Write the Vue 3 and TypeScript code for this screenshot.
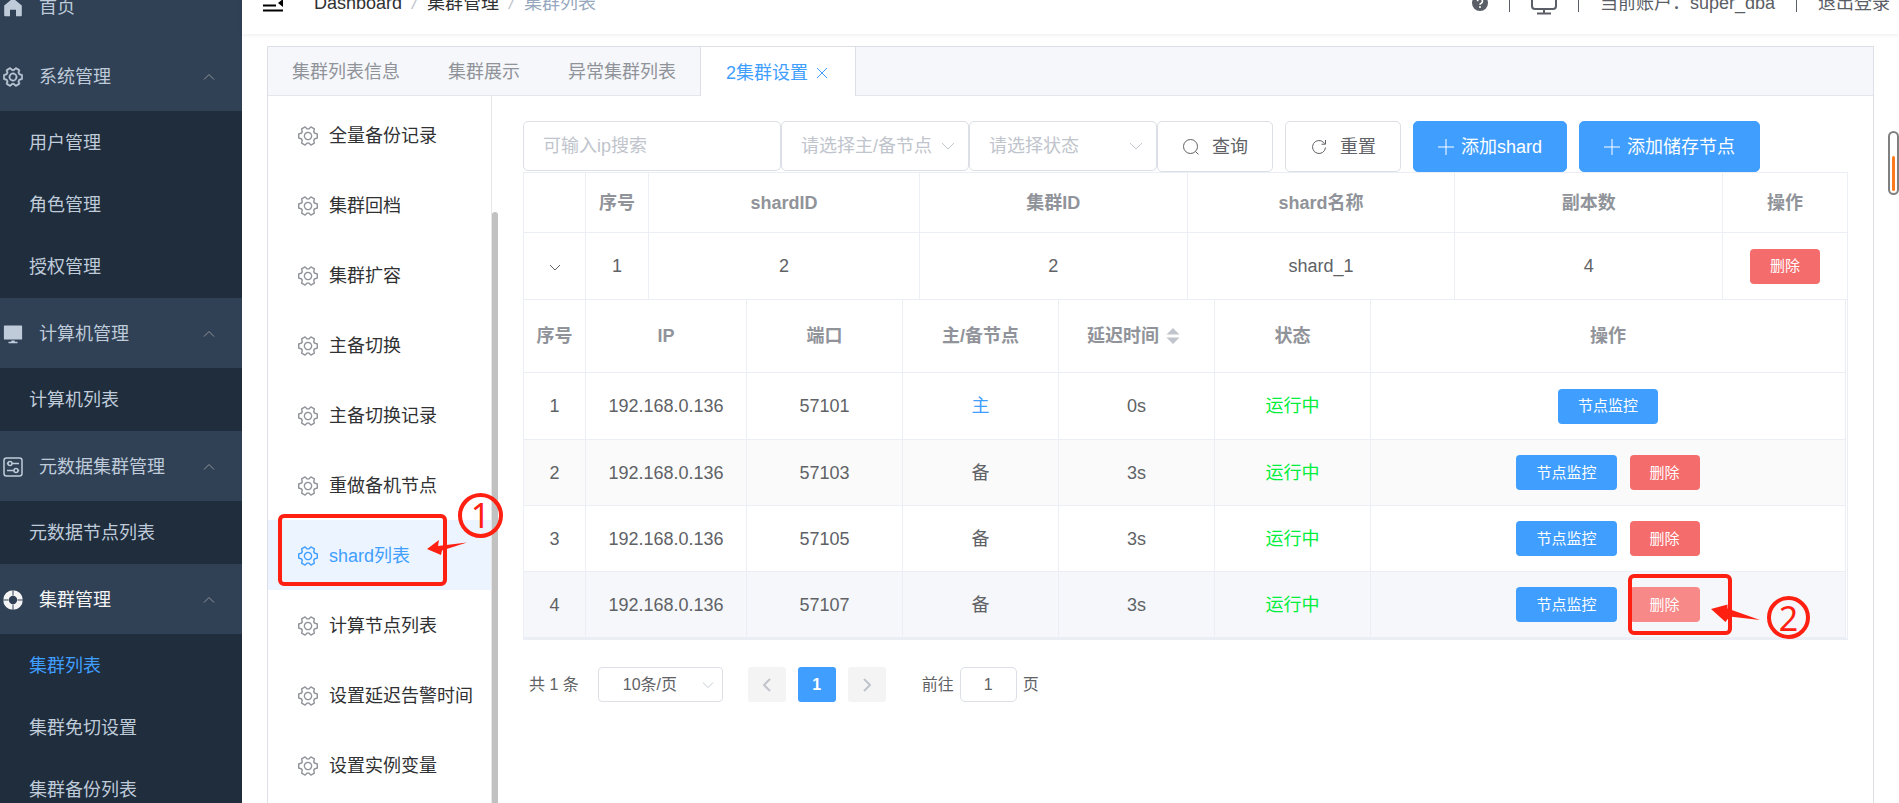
<script setup lang="ts">
import { ref } from 'vue'

interface MenuGroup {
  icon: string
  title: string
  open?: boolean
  children: string[]
}

interface DbNode {
  id: number
  ip: string
  port: number
  primary: boolean
  delay: string
}

const groups: MenuGroup[] = [
  { icon: 'home', title: '首页', children: [] },
  { icon: 'gear', title: '系统管理', children: ['用户管理', '角色管理', '授权管理'] },
  { icon: 'platform', title: '计算机管理', children: ['计算机列表'] },
  { icon: 'setup', title: '元数据集群管理', children: ['元数据节点列表'] },
  { icon: 'help', title: '集群管理', open: true, children: ['集群列表', '集群免切设置', '集群备份列表'] },
]
const activeLink = '集群列表'

const tabs = ['集群列表信息', '集群展示', '异常集群列表']

const settings = [
  '全量备份记录', '集群回档', '集群扩容', '主备切换', '主备切换记录',
  '重做备机节点', 'shard列表', '计算节点列表', '设置延迟告警时间', '设置实例变量',
]
const activeSetting = 'shard列表'

const nodes: DbNode[] = [
  { id: 1, ip: '192.168.0.136', port: 57101, primary: true, delay: '0s' },
  { id: 2, ip: '192.168.0.136', port: 57103, primary: false, delay: '3s' },
  { id: 3, ip: '192.168.0.136', port: 57105, primary: false, delay: '3s' },
  { id: 4, ip: '192.168.0.136', port: 57107, primary: false, delay: '3s' },
]
const hovered = 4

const keyword = ref('')
const role = ref('')
const state = ref('')
const pageSize = ref('10')
const page = ref('1')

const gearPath =
  'M600.704 64a32 32 0 0 1 30.464 22.208l35.2 109.376c14.784 7.232 28.928 15.36 42.432 24.512l112.384-24.192a32 32 0 0 1 34.432 15.36L944.32 364.8a32 32 0 0 1-4.032 37.504l-77.12 85.12a357.12 357.12 0 0 1 0 49.024l77.12 85.248a32 32 0 0 1 4.032 37.504l-88.704 153.6a32 32 0 0 1-34.432 15.296L708.8 803.904c-13.44 9.088-27.648 17.28-42.368 24.512l-35.264 109.376A32 32 0 0 1 600.704 960H423.296a32 32 0 0 1-30.464-22.208L357.696 828.48a351.616 351.616 0 0 1-42.56-24.64l-112.32 24.256a32 32 0 0 1-34.432-15.36L79.68 659.2a32 32 0 0 1 4.032-37.504l77.12-85.248a357.12 357.12 0 0 1 0-48.896l-77.12-85.248A32 32 0 0 1 79.68 364.8l88.704-153.6a32 32 0 0 1 34.432-15.296l112.32 24.256c13.568-9.152 27.776-17.408 42.56-24.64l35.2-109.312A32 32 0 0 1 423.232 64H600.64zm-23.424 64H446.72l-36.352 113.088-24.512 11.968a294.113 294.113 0 0 0-34.816 20.096l-22.656 15.36-116.224-25.088-65.28 113.152 79.68 88.192-1.92 27.136a293.12 293.12 0 0 0 0 40.192l1.92 27.136-79.808 88.192 65.344 113.152 116.224-25.024 22.656 15.296a294.113 294.113 0 0 0 34.816 20.096l24.512 11.968L446.72 896h130.688l36.48-113.152 24.448-11.904a288.282 288.282 0 0 0 34.752-20.096l22.592-15.296 116.288 25.024 65.28-113.152-79.744-88.192 1.92-27.136a293.12 293.12 0 0 0 0-40.256l-1.92-27.136 79.808-88.128-65.344-113.152-116.288 24.96-22.592-15.232a287.616 287.616 0 0 0-34.752-20.096l-24.448-11.904L577.344 128zM512 320a192 192 0 1 1 0 384 192 192 0 0 1 0-384zm0 64a128 128 0 1 0 0 256 128 128 0 0 0 0-256z'
</script>

<template>
  <div class="viewport">
    <div class="layout">
      <nav class="sidebar" aria-label="主导航">
        <section v-for="g in groups" :key="g.title">
          <button type="button" class="group" :class="{ open: g.open }">
            <svg v-if="g.icon === 'home'" class="ico" viewBox="0 0 20 20">
              <path d="M10 1.2 1.2 8.6v9.6a1 1 0 0 0 1 1H7v-6.4h6v6.4h4.8a1 1 0 0 0 1-1V8.6z" fill="currentColor" />
            </svg>
            <svg v-else-if="g.icon === 'gear'" class="ico" viewBox="52 52 920 920">
              <path :d="gearPath" fill="currentColor" stroke="currentColor" stroke-width="20" transform="rotate(30 512 512)" />
            </svg>
            <svg v-else-if="g.icon === 'platform'" class="ico" viewBox="0 0 20 20">
              <path d="M1.5 1.5h17a.6.6 0 0 1 .6.6V15a.6.6 0 0 1-.6.6h-17A.6.6 0 0 1 .9 15V2.100a.6.6 0 0 1 .6-.6zM8.500 16.600h3l.5 1.200h2.500v1.500h-9v-1.500H8z" fill="currentColor" />
            </svg>
            <svg v-else-if="g.icon === 'setup'" class="ico" viewBox="0 0 20 20" fill="none" stroke="currentColor" stroke-width="1.500">
              <rect x="1" y="1" width="18" height="18" rx="2.500" />
              <circle cx="7" cy="6.500" r="2" /><path d="M9 6.500h7M3.800 6.500H5" />
              <circle cx="13" cy="13.500" r="2" /><path d="M4 13.500h7M15 13.500h1.200" />
            </svg>
            <svg v-else class="ico" viewBox="0 0 20 20">
              <circle cx="10" cy="10" r="7" fill="none" stroke="currentColor" stroke-width="5.600" />
              <path d="M10 0v5.500M10 14.500V20M0 10h5.500M14.500 10H20" stroke="#304156" stroke-width="1" />
            </svg>
            <span class="group-title">{{ g.title }}</span>
            <svg v-if="g.children.length" class="fold" viewBox="0 0 12 8"><path d="M1 6.500 6 1.500l5 5" /></svg>
          </button>
          <ul v-if="g.children.length" class="links">
            <li v-for="c in g.children" :key="c">
              <a href="#" :class="{ on: c === activeLink }">{{ c }}</a>
            </li>
          </ul>
        </section>
      </nav>

      <div class="page">
        <header class="topbar">
          <button type="button" class="burger" aria-label="折叠菜单">
            <svg viewBox="0 0 22 18"><path d="M1 1.500h20M1 11.500h13M1 16.500h20" stroke="#000" stroke-width="2" /><path d="M21 5v8l-5-4z" fill="#000" /></svg>
          </button>
          <nav class="crumbs" aria-label="面包屑">
            <a href="#">Dashboard</a><i>/</i><a href="#">集群管理</a><i>/</i><span>集群列表</span>
          </nav>
          <div class="account">
            <svg class="q" viewBox="0 0 16 16">
              <circle cx="8" cy="8" r="8" fill="#5a5e66" />
              <path d="M5.600 6.200a2.400 2.400 0 1 1 3.300 2.200c-.7.3-.9.600-.9 1.300" fill="none" stroke="#fff" stroke-width="1.600" /><circle cx="8" cy="12" r="1" fill="#fff" />
            </svg>
            <b></b>
            <svg class="screen" viewBox="0 0 26 24" fill="none" stroke="#5a5e66" stroke-width="2">
              <rect x="1" y="1" width="24" height="17" rx="3" /><path d="M13 18v4M6 22.500h14" />
            </svg>
            <b></b>
            <span>当前账户：super_dba</span>
            <b></b>
            <a href="#">退出登录</a>
          </div>
        </header>

        <main class="card">
          <div class="tabs" role="tablist">
            <button v-for="t in tabs" :key="t" type="button" role="tab" class="tab">{{ t }}</button>
            <button type="button" role="tab" aria-selected="true" class="tab current">
              2集群设置
              <svg viewBox="0 0 12 12"><path d="m1 1 10 10M11 1 1 11" /></svg>
            </button>
          </div>

          <div class="body">
            <div class="side">
              <ul class="side-menu">
                <li v-for="s in settings" :key="s" :class="{ on: s === activeSetting }">
                  <a href="#">
                    <svg class="ico" viewBox="64 64 896 896"><path :d="gearPath" fill="currentColor" transform="rotate(30 512 512)" /></svg>
                    {{ s }}
                  </a>
                  <svg v-if="s === activeSetting" class="mark mark-menu" viewBox="0 0 240 120">
                    <rect x="12" y="36" width="165" height="68" rx="4" />
                    <circle cx="212.500" cy="35.500" r="20.500" />
                    <path d="M159 69 171 60 170 66 199 62.500 174 70.500 173 75z" />
                    <text x="212.500" y="48">1</text>
                  </svg>
                </li>
              </ul>
              <div class="track"><div class="thumb"></div></div>
            </div>

            <section class="content">
              <form class="filters" @submit.prevent>
                <input v-model="keyword" class="kw" type="text" placeholder="可输入ip搜索" aria-label="可输入ip搜索" />
                <label class="pick">
                  <select v-model="role" aria-label="主/备节点">
                    <option value="">请选择主/备节点</option>
                  </select>
                  <svg viewBox="0 0 14 8"><path d="m1 1 6 6 6-6" /></svg>
                </label>
                <label class="pick">
                  <select v-model="state" aria-label="状态">
                    <option value="">请选择状态</option>
                  </select>
                  <svg viewBox="0 0 14 8"><path d="m1 1 6 6 6-6" /></svg>
                </label>
                <button type="submit" class="btn">
                  <svg viewBox="0 0 18 18"><circle cx="8.500" cy="8.500" r="7" /><path d="m13.500 13.500 3 3" /></svg>查询
                </button>
                <button type="reset" class="btn gap">
                  <svg viewBox="0 0 18 18"><path d="M15.500 9.500A6.500 6.500 0 1 1 13.600 4.400L15 5.800M15.500 2v4.200h-4" /></svg>重置
                </button>
                <button type="button" class="btn blue gap">
                  <svg viewBox="0 0 16 16"><path d="M8 0v16M0 8h16" /></svg>添加shard
                </button>
                <button type="button" class="btn blue gap">
                  <svg viewBox="0 0 16 16"><path d="M8 0v16M0 8h16" /></svg>添加储存节点
                </button>
              </form>

              <table class="grid outer">
                <colgroup>
                  <col class="c-idx" /><col class="c-num" /><col class="c-shard" /><col /><col /><col /><col class="c-op" />
                </colgroup>
                <thead>
                  <tr>
                    <th></th><th>序号</th><th>shardID</th><th>集群ID</th><th>shard名称</th><th>副本数</th><th>操作</th>
                  </tr>
                </thead>
                <tbody>
                  <tr>
                    <td>
                      <button type="button" class="expand" aria-label="收起">
                        <svg viewBox="0 0 12 8"><path d="m1 1 5 5 5-5" /></svg>
                      </button>
                    </td>
                    <td>1</td><td>2</td><td>2</td><td>shard_1</td><td>4</td>
                    <td><button type="button" class="mini red">删除</button></td>
                  </tr>
                  <tr>
                    <td colspan="7" class="nest">
                      <table class="grid inner">
                        <colgroup>
                          <col class="c-idx" /><col class="c-ip" /><col class="c-mid" /><col class="c-mid" /><col class="c-mid" /><col class="c-mid" /><col />
                        </colgroup>
                        <thead>
                          <tr>
                            <th>序号</th><th>IP</th><th>端口</th><th>主/备节点</th>
                            <th>
                              <span class="sort">延迟时间
                                <svg viewBox="0 0 14 16"><path d="M7 0l6.500 6.500H.5zM7 16 .5 9.500h13z" fill="#c0c4cc" /></svg>
                              </span>
                            </th>
                            <th>状态</th><th>操作</th>
                          </tr>
                        </thead>
                        <tbody>
                          <tr v-for="n in nodes" :key="n.id" :class="{ stripe: n.id === 2, hover: n.id === hovered }">
                            <td>{{ n.id }}</td>
                            <td>{{ n.ip }}</td>
                            <td>{{ n.port }}</td>
                            <td><a v-if="n.primary" href="#" class="primary">主</a><template v-else>备</template></td>
                            <td>{{ n.delay }}</td>
                            <td class="running">运行中</td>
                            <td>
                              <div class="ops">
                                <button type="button" class="mini">节点监控</button>
                                <div v-if="!n.primary" class="del">
                                  <button type="button" class="mini red" :class="{ over: n.id === hovered }">删除</button>
                                  <svg v-if="n.id === hovered" class="mark mark-del" viewBox="0 0 200 80">
                                    <rect x="10" y="9" width="100" height="57" rx="4" />
                                    <circle cx="168.500" cy="50.500" r="19.500" />
                                    <path d="M91 42 107.500 37.500 107.500 41.500 140 53 109.500 49.500 105.500 55z" />
                                    <text x="168.500" y="64">2</text>
                                  </svg>
                                </div>
                              </div>
                            </td>
                          </tr>
                        </tbody>
                      </table>
                    </td>
                  </tr>
                </tbody>
              </table>

              <div class="pager">
                <span>共 1 条</span>
                <label class="pick size">
                  <select v-model="pageSize" aria-label="每页条数"><option value="10">10条/页</option></select>
                  <svg viewBox="0 0 14 8"><path d="m1 1 6 6 6-6" /></svg>
                </label>
                <button type="button" class="pg" aria-label="上一页"><svg viewBox="0 0 8 14"><path d="M7 1 1 7l6 6" /></svg></button>
                <button type="button" class="pg now">1</button>
                <button type="button" class="pg" aria-label="下一页"><svg viewBox="0 0 8 14"><path d="m1 1 6 6-6 6" /></svg></button>
                <label class="jump">前往<input v-model="page" type="text" />页</label>
              </div>
            </section>
          </div>
        </main>
      </div>
    </div>
    <div class="meter"><div class="meter-fill"></div></div>
  </div>
</template>

<style>
body {
  margin: 0;
  background: #fff;
}
</style>

<style scoped>
* {
  box-sizing: border-box;
}
.viewport {
  position: relative;
  height: 100vh;
  overflow: hidden;
  font: 18px/24px "Liberation Sans", "Noto Sans CJK SC", sans-serif;
  color: #606266;
}
button,
input,
select {
  font: inherit;
  color: inherit;
  margin: 0;
}
button {
  padding: 0;
  border: 0;
  background: none;
  cursor: pointer;
}
a {
  color: inherit;
  text-decoration: none;
}
ul {
  list-style: none;
  margin: 0;
  padding: 0;
}
svg {
  display: block;
  flex: none;
}
/* the page is scrolled down a little, so its top edge is cut off */
.layout {
  display: flex;
  margin-top: -29px;
}
.ico {
  width: 20px;
  height: 20px;
}

.sidebar {
  flex: none;
  width: 242px;
  background: #1f2d3d;
  color: #bfcbd9;
}
.group {
  display: flex;
  align-items: center;
  width: 100%;
  height: 70px;
  padding: 1px 27px 0 3px;
  background: #304156;
}
.group.open {
  color: #f4f4f5;
}
.group-title {
  flex: 1;
  margin-left: 16px;
  text-align: left;
}
.fold {
  width: 12px;
  height: 8px;
}
.fold path {
  fill: none;
  stroke: #909399;
}
.links {
  padding-bottom: 1px;
}
.links a {
  display: block;
  height: 62px;
  padding-left: 29px;
  line-height: 64px;
}
.links .on {
  color: #409eff;
}

.page {
  flex: 1;
  min-width: 0;
}
.topbar {
  display: flex;
  align-items: center;
  height: 63px;
  padding: 0 9px 0 20px;
  box-shadow: 0 1px 4px rgba(0, 21, 41, 0.08);
}
.burger svg {
  width: 22px;
  height: 18px;
}
.crumbs {
  display: flex;
  margin-left: 30px;
  color: #303133;
}
.crumbs i {
  margin: 0 10px;
  color: #c0c4cc;
}
.crumbs span {
  color: #97a8be;
}
.account {
  display: flex;
  align-items: center;
  margin-left: auto;
  color: #5a5e66;
}
.account b {
  width: 1px;
  height: 18px;
  margin: 0 21px;
  background: #5a5e66;
}
.q {
  width: 16px;
  height: 16px;
}
.screen {
  width: 26px;
  height: 24px;
}

.card {
  margin: 12px 25px 0;
  border: 1px solid #dcdfe6;
}
.tabs {
  display: flex;
  height: 49px;
  background: #f5f7fa;
  border-bottom: 1px solid #e4e7ed;
}
.tab {
  padding: 2px 24px 0;
  color: #909399;
}
.tab.current {
  display: flex;
  align-items: center;
  gap: 8px;
  height: 49px;
  border: solid #dcdfe6;
  border-width: 0 1px;
  padding: 2px 27px 0 25px;
  background: #fff;
  color: #409eff;
}
.tab svg {
  width: 12px;
  height: 12px;
}
.tab path {
  stroke: #409eff;
}

.body {
  display: flex;
}
.side {
  display: flex;
  flex: none;
  width: 231px;
}
.side-menu {
  flex: 1;
  padding: 4px 0 70px;
}
.side-menu li {
  position: relative;
  color: #303133;
}
.side-menu a {
  display: flex;
  align-items: center;
  gap: 11px;
  height: 70px;
  padding: 2px 0 0 30px;
  white-space: nowrap;
}
.side-menu .ico {
  color: #909399;
}
.side-menu .on a,
.side-menu .on .ico {
  color: #409eff;
}
.side-menu .on a {
  background: #ecf5ff;
}
.track {
  width: 8px;
  padding-top: 116px;
  border-left: 1px solid #e6e6e6;
}
.thumb {
  width: 6px;
  height: 100%;
  border-radius: 3px;
  background: #c1c1c1;
}

.mark {
  position: absolute;
  z-index: 2;
  fill: #ff2011;
  overflow: visible;
  pointer-events: none;
}
.mark rect,
.mark circle {
  fill: none;
  stroke: #ff2011;
  stroke-width: 4px;
}
.mark text {
  font: 34px "Noto Sans", sans-serif;
  text-anchor: middle;
}
.mark-menu {
  left: 0;
  top: -40px;
  width: 240px;
  height: 120px;
}
.mark-del {
  left: -10px;
  top: -20px;
  width: 200px;
  height: 80px;
}

.content {
  flex: 1;
  min-width: 0;
  padding: 25px 25px 0 24px;
}
.filters {
  display: flex;
  align-items: flex-start;
}
.kw,
.pick select,
.jump input {
  border: 1px solid #dcdfe6;
  border-radius: 5px;
  background: #fff;
  outline: 0;
}
.kw {
  width: 258px;
  height: 50px;
  padding: 0 19px;
}
.kw::placeholder {
  color: #c0c4cc;
  opacity: 1;
}
.pick {
  position: relative;
  width: 188px;
}
.pick select {
  display: block;
  width: 100%;
  height: 50px;
  padding: 0 19px;
  appearance: none;
  color: #c0c4cc;
}
.pick svg {
  position: absolute;
  top: 21px;
  right: 14px;
  width: 14px;
  height: 8px;
  pointer-events: none;
}
.pick path,
.pg path {
  fill: none;
  stroke: #c0c4cc;
}
.btn {
  display: flex;
  align-items: center;
  justify-content: center;
  gap: 12px;
  height: 51px;
  padding: 0 24px;
  border: 1px solid #dcdfe6;
  border-radius: 5px;
  background: #fff;
}
.btn svg {
  width: 18px;
  height: 18px;
  fill: none;
  stroke: #606266;
  stroke-width: 1px;
}
.gap {
  margin-left: 12px;
}
.blue {
  gap: 7px;
  border-color: #409eff;
  background: #409eff;
  color: #fff;
}
.blue svg {
  width: 16px;
  height: 16px;
  stroke: #fff;
}

.grid {
  width: 100%;
  table-layout: fixed;
  border-collapse: separate;
  border-spacing: 0;
}
.outer {
  border: solid #ebeef5;
  border-width: 1px 0 1px 1px;
}
.grid th,
.grid td {
  padding: 0;
  border: solid #ebeef5;
  border-width: 0 1px 1px 0;
  text-align: center;
}
.grid th {
  height: 60px;
  color: #909399;
}
.grid td {
  height: 67px;
}
.grid .nest {
  height: auto;
  padding-right: 1px;
}
.inner th {
  height: 73px;
}
.inner td {
  height: 66px;
}
.inner tr:first-child td {
  height: 67px;
}
.c-idx {
  width: 62px;
}
.c-num {
  width: 63px;
}
.c-shard {
  width: 271px;
}
.c-op {
  width: 125px;
}
.c-ip {
  width: 161px;
}
.c-mid {
  width: 156px;
}
.stripe td {
  background: #fafafa;
}
.hover td {
  background: #f5f7fa;
}
.primary {
  color: #409eff;
}
.grid .running {
  color: #00ee3c;
}
.expand svg {
  width: 12px;
  height: 8px;
  fill: none;
  stroke: #606266;
}
.sort {
  display: inline-flex;
  align-items: center;
  gap: 7px;
  padding-right: 6px;
}
.sort svg {
  width: 14px;
  height: 16px;
}
.ops {
  display: flex;
  justify-content: center;
  gap: 13px;
}
.del {
  position: relative;
}
.mini {
  height: 35px;
  padding: 0 20px;
  border-radius: 4px;
  background: #409eff;
  color: #fff;
  font-size: 15px;
}
.red {
  background: #f56c6c;
}
.over {
  background: #f78989;
}

.pager {
  display: flex;
  align-items: center;
  margin-top: 27px;
  padding-left: 6px;
  font-size: 16px;
}
.size {
  width: 125px;
  margin: 0 25px 0 19px;
}
.size select {
  height: 35px;
  padding: 0 24px;
  border-radius: 4px;
  color: #606266;
}
.size svg {
  top: 14px;
  right: 9px;
  width: 12px;
}
.pg {
  display: flex;
  align-items: center;
  justify-content: center;
  width: 38px;
  height: 35px;
  margin-right: 12px;
  border-radius: 3px;
  background: #f4f4f5;
}
.pg svg {
  width: 8px;
  height: 14px;
}
.pg path {
  stroke-width: 2px;
}
.now {
  background: #409eff;
  color: #fff;
  font-weight: bold;
}
.jump {
  display: flex;
  align-items: center;
  gap: 6px;
  margin-left: 24px;
}
.jump input {
  width: 57px;
  height: 35px;
  padding: 0;
  text-align: center;
}

.meter {
  position: absolute;
  top: 131px;
  right: 0;
  display: flex;
  align-items: flex-end;
  width: 11px;
  height: 64px;
  padding: 2px;
  border: 2px solid #808080;
  border-radius: 6px;
  background: #fff;
}
.meter-fill {
  width: 3px;
  height: 35px;
  border-radius: 2px;
  background: #ff7a1a;
}
</style>
